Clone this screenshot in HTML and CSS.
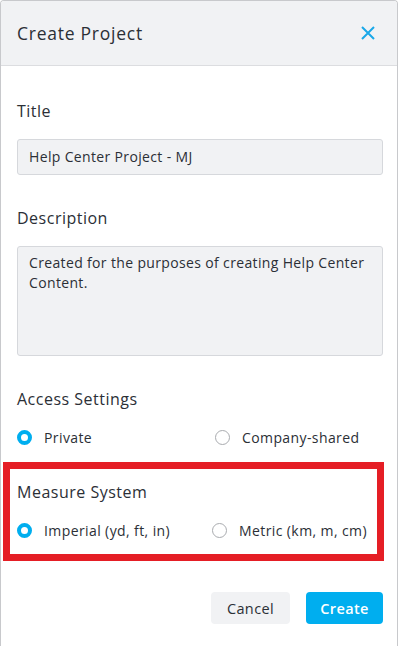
FILE: index.html
```html
<!DOCTYPE html>
<html lang="en">
<head>
    <meta charset="UTF-8">
    <meta name="viewport" content="width=device-width, initial-scale=1.0">
    <title>Create Project</title>
    <link rel="stylesheet" href="styles.css">
</head>
<body>
    <div class="modal">
        <div class="modal-header">
            <h2>Create Project</h2>
            <button class="close-btn" type="button" aria-label="Close">
                <svg width="14" height="14" viewBox="0 0 14 14">
                    <path d="M1 1 L13 13 M13 1 L1 13" stroke="#1aa8e8" stroke-width="2" fill="none"/>
                </svg>
            </button>
        </div>
        <form class="modal-body">
            <div class="form-group">
                <label class="group-label" for="title">Title</label>
                <div class="field" id="title">Help Center Project - MJ</div>
            </div>
            <div class="form-group">
                <label class="group-label" for="description">Description</label>
                <div class="field field-area" id="description">Created for the purposes of creating Help Center Content.</div>
            </div>
            <div class="form-group">
                <div class="group-label">Access Settings</div>
                <div class="radio-row">
                    <label class="radio"><span class="dot checked"></span>Private</label>
                    <label class="radio"><span class="dot"></span>Company-shared</label>
                </div>
            </div>
            <div class="form-group highlight">
                <div class="group-label">Measure System</div>
                <div class="radio-row">
                    <label class="radio"><span class="dot checked"></span>Imperial (yd, ft, in)</label>
                    <label class="radio"><span class="dot"></span>Metric (km, m, cm)</label>
                </div>
            </div>
            <div class="actions">
                <button type="button" class="btn btn-cancel">Cancel</button>
                <button type="submit" class="btn btn-create">Create</button>
            </div>
        </form>
    </div>
</body>
</html>
```
FILE: styles.css
```css
body {
    margin: 0;
    font-family: "Open Sans", "Noto Sans", sans-serif;
    color: #2b2f36;
    background: #fff;
}
.modal {
    width: 398px;
    height: 646px;
    box-sizing: border-box;
    border: 1px solid #c8c9cc;
    border-bottom: none;
    border-radius: 4px 4px 0 0;
    overflow: hidden;
}
.modal-header {
    height: 64px;
    background-color: #f1f2f4;
    border-bottom: 1px solid #dcdde0;
    display: flex;
    align-items: center;
    justify-content: space-between;
    padding: 0 22px 0 16px;
}
.modal-header h2 {
    margin: 0;
    font-size: 17.5px;
    font-weight: 400;
    letter-spacing: 0.75px;
}
.close-btn {
    border: none;
    background: none;
    padding: 0;
    width: 14px;
    height: 14px;
    display: flex;
    cursor: pointer;
}
.modal-body {
    padding: 35px 14px 0 16px;
}
.form-group {
    margin-bottom: 33px;
}
.group-label {
    display: block;
    font-size: 16px;
    line-height: 20px;
    letter-spacing: 0.5px;
    margin-bottom: 18px;
}
.field {
    height: 36px;
    box-sizing: border-box;
    background-color: #f1f2f4;
    border: 1px solid #d6d8dc;
    border-radius: 3px;
    padding: 7px 11px;
    font-size: 14px;
    line-height: 20px;
    letter-spacing: 0.35px;
}
.field-area {
    height: 110px;
    padding-top: 6px;
}
.radio-row {
    display: grid;
    grid-template-columns: 1fr 1fr;
    column-gap: 30px;
    margin-top: 2px;
}
.radio {
    display: flex;
    align-items: center;
    gap: 12px;
    height: 20px;
    font-size: 14px;
    letter-spacing: 0.4px;
}
.dot {
    width: 15px;
    height: 15px;
    box-sizing: border-box;
    border: 1px solid #a9abaf;
    border-radius: 50%;
    background: #fff;
    flex-shrink: 0;
}
.dot.checked {
    border: 4px solid #00aeef;
}
.highlight {
    border: 7px solid #e51e25;
    margin: -18px -1px 31px -14px;
    padding: 13px 0 14px 7px;
}
.actions {
    display: flex;
    justify-content: flex-end;
    gap: 16px;
}
.btn {
    height: 32px;
    border: none;
    border-radius: 4px;
    font-family: inherit;
    font-size: 14.5px;
    letter-spacing: 0.4px;
    cursor: pointer;
}
.btn-cancel {
    width: 79px;
    background-color: #f1f2f4;
    color: #2b2f36;
}
.btn-create {
    width: 77px;
    background-color: #00aeef;
    color: #fff;
    font-weight: 600;
}
```
